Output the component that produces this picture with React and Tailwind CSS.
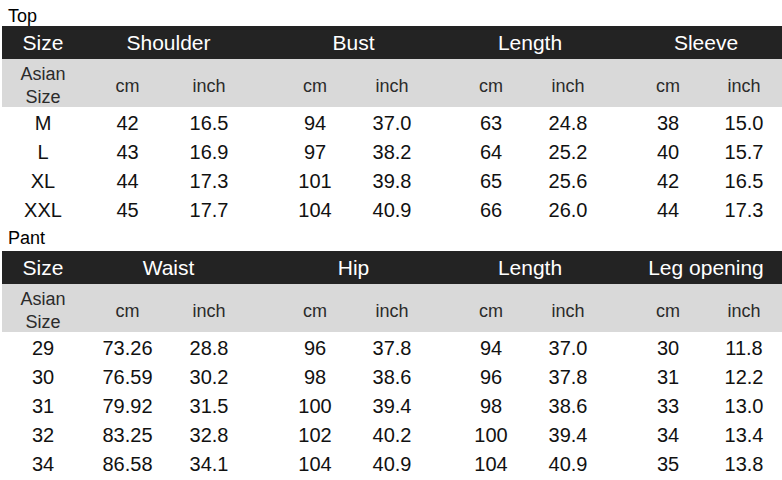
import React from "react";

const GRID = "grid grid-cols-[84px_83px_93px_92px_88px_88px_88px_88px_74px]";
const PADS = ["pr-[2px]", "", "pr-[13px]", "pl-[14px]", "pr-[12px]", "pl-[10px]", "pr-[12px]", "pl-[12px]", "pl-[2px]"];
const HPADS = ["pr-[11px]", "pl-[3px]", "", "pl-[14px]"];

function SizeTable({ label, labelClass, groups, rows }) {
  return (
    <div>
      <div className={`h-[26px] pl-[6px] text-[18px] text-black ${labelClass}`}>{label}</div>
      <div className={`${GRID} h-[33px] bg-[#232323] text-white text-[21px] leading-[33px]`}>
        <div className="text-center pr-[2px]">Size</div>
        {groups.map((g, i) => (
          <div key={g} className={`col-span-2 text-center ${HPADS[i]}`}>{g}</div>
        ))}
      </div>
      <div className={`${GRID} h-[48px] bg-[#d9d9d9] text-[#2b2b2b] text-[18px] pt-[4px]`}>
        <div className="flex items-center justify-center text-center leading-[23px] pr-[2px]">
          Asian<br />Size
        </div>
        {[0, 1, 2, 3].map((i) => (
          <React.Fragment key={i}>
            <div className={`flex items-center justify-center ${PADS[1 + i * 2]}`}>cm</div>
            <div className={`flex items-center justify-center ${PADS[2 + i * 2]}`}>inch</div>
          </React.Fragment>
        ))}
      </div>
      <div className="pt-[2px]">
        {rows.map((r) => (
          <div key={r[0]} className={`${GRID} h-[29px] leading-[29px] text-[20px] text-[#111]`}>
            {r.map((v, j) => (
              <div key={j} className={`text-center ${PADS[j]}`}>{v}</div>
            ))}
          </div>
        ))}
      </div>
    </div>
  );
}

export default function App() {
  return (
    <div
      className="w-[782px] h-[480px] bg-white pl-[2px] overflow-hidden"
      style={{ fontFamily: '"Liberation Sans", Arial, sans-serif' }}
    >
      <SizeTable
        label="Top"
        labelClass="pt-[6px] leading-[20px]"
        groups={["Shoulder", "Bust", "Length", "Sleeve"]}
        rows={[
          ["M", "42", "16.5", "94", "37.0", "63", "24.8", "38", "15.0"],
          ["L", "43", "16.9", "97", "38.2", "64", "25.2", "40", "15.7"],
          ["XL", "44", "17.3", "101", "39.8", "65", "25.6", "42", "16.5"],
          ["XXL", "45", "17.7", "104", "40.9", "66", "26.0", "44", "17.3"],
        ]}
      />
      <SizeTable
        label="Pant"
        labelClass="leading-[26px]"
        groups={["Waist", "Hip", "Length", "Leg opening"]}
        rows={[
          ["29", "73.26", "28.8", "96", "37.8", "94", "37.0", "30", "11.8"],
          ["30", "76.59", "30.2", "98", "38.6", "96", "37.8", "31", "12.2"],
          ["31", "79.92", "31.5", "100", "39.4", "98", "38.6", "33", "13.0"],
          ["32", "83.25", "32.8", "102", "40.2", "100", "39.4", "34", "13.4"],
          ["34", "86.58", "34.1", "104", "40.9", "104", "40.9", "35", "13.8"],
        ]}
      />
    </div>
  );
}
